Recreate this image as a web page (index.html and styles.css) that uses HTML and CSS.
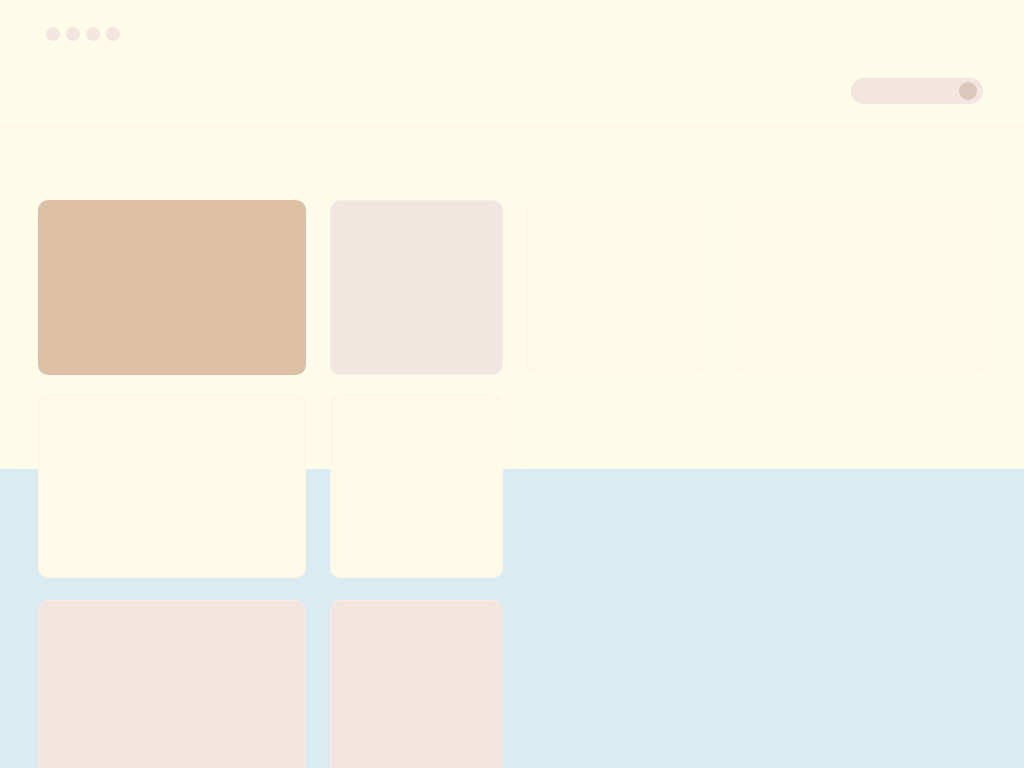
FILE: index.html
```html
<!DOCTYPE html>
<html>
<head>
<meta charset="utf-8">
<link rel="stylesheet" href="styles.css">
</head>
<body>
<div class="page">
  <header class="header">
    <div class="dots">
      <span class="dot"></span><span class="dot"></span><span class="dot"></span><span class="dot"></span>
    </div>
    <div class="header-row">
      <div class="toggle"><span class="knob"></span></div>
    </div>
  </header>
  <main class="grid">
    <div class="card tan"></div>
    <div class="card rose"></div>
    <div class="card faint"></div>
    <div class="card faint wide"></div>
    <div class="card cream"></div>
    <div class="card cream"></div>
    <div class="spacer"></div>
    <div class="spacer"></div>
    <div class="card pink tall"></div>
    <div class="card pink tall"></div>
  </main>
</div>
</body>
</html>
```
FILE: styles.css
```css
html, body {
  margin: 0;
  padding: 0;
  height: 100%;
  overflow: hidden;
}
body {
  font-family: "Liberation Sans", Arial, sans-serif;
  background: linear-gradient(to bottom, #fffde9 0, #fffde9 469px, #daecf2 469px, #daecf2 100%);
}
.page {
  width: 1024px;
  height: 768px;
  overflow: hidden;
}
.header {
  height: 128px;
  box-sizing: border-box;
  padding: 27px 41px 0 46px;
  border-bottom: 2px solid #fcf9e4;
}
.dots {
  display: flex;
  gap: 6px;
}
.dot {
  width: 14px;
  height: 14px;
  border-radius: 50%;
  background: #f3e5df;
}
.header-row {
  display: flex;
  justify-content: flex-end;
  margin-top: 37px;
}
.toggle {
  width: 132px;
  height: 26px;
  border-radius: 13px;
  background: #f3e6e1;
  display: flex;
  align-items: center;
  justify-content: flex-end;
  padding-right: 6px;
  box-sizing: border-box;
}
.knob {
  width: 18px;
  height: 18px;
  border-radius: 50%;
  background: #dcc7bd;
}
.grid {
  display: grid;
  grid-template-columns: 268px 173px 177px 1fr;
  grid-template-rows: 175px 184px 200px;
  column-gap: 24px;
  row-gap: 19px;
  padding: 72px 40px 0 38px;
}
.card {
  border-radius: 10px;
  box-sizing: border-box;
}
.tan { background: #dcc1a7; }
.rose { background: #f2e6e1; border: 1px solid #f5ece4; }
.faint { background: #fffae8; border: 1px solid #fdf8e6; }
.wide { margin-left: 8px; }
.cream { background: #fffae7; border: 1px solid #fcf6e6; }
.pink { background: #f3e6e1; border: 1px solid #f7ede6; margin-top: 3px; }
.spacer { }
```
